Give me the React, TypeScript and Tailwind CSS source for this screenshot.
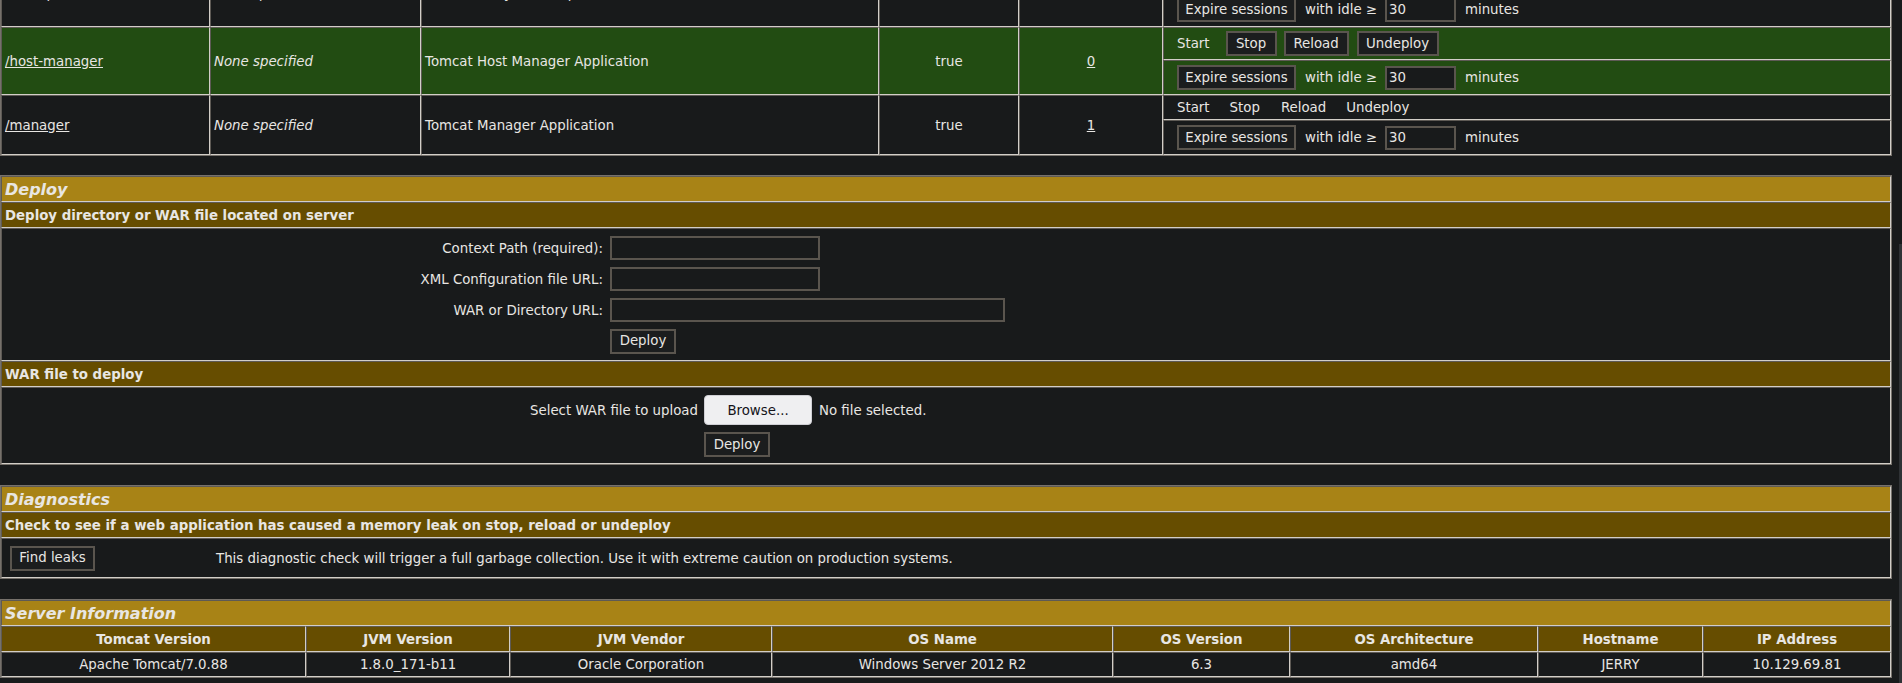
import { Fragment } from "react";

const cell =
  "border border-t-[#5e5a55] border-l-[#5e5a55] border-r-[#d2cec8] border-b-[#d2cec8]";
const btn =
  "h-[25px] border-2 border-[#5a554e] bg-[#1b1d1e] text-[#e8e6e3] text-[13.33px] leading-none flex items-center justify-center";
const field =
  "h-[24px] border-2 border-[#5a554e] bg-[#181a1b] text-[#e8e6e3] text-[13.33px] px-[2px] outline-none";

type App = {
  path: string;
  name: string;
  running: string;
  sessions: string;
  green: boolean;
  self: boolean;
};

const apps: App[] = [
  { path: "/examples", name: "Servlet and JSP Examples", running: "true", sessions: "0", green: false, self: false },
  { path: "/host-manager", name: "Tomcat Host Manager Application", running: "true", sessions: "0", green: true, self: false },
  { path: "/manager", name: "Tomcat Manager Application", running: "true", sessions: "1", green: false, self: true },
];

function Commands({ app }: { app: App }) {
  if (app.self) {
    return (
      <>
        <span>Start</span>
        <span className="ml-[20px]">Stop</span>
        <span className="ml-[21px]">Reload</span>
        <span className="ml-[20px]">Undeploy</span>
      </>
    );
  }
  return (
    <>
      <span>Start</span>
      <button type="button" className={`${btn} ml-[16px] w-[51px]`}>Stop</button>
      <button type="button" className={`${btn} ml-[7px] w-[65px]`}>Reload</button>
      <button type="button" className={`${btn} ml-[8px] w-[82px]`}>Undeploy</button>
    </>
  );
}

function AppsTable() {
  return (
    <div className="-mt-[42px] border border-[#76716b]">
      <div className="grid grid-cols-[209px_211px_458px_140px_144px_728px] grid-rows-[33px_35px_33px_35px_25px_35px]">
        {apps.map((app) => {
          const bg = app.green ? "bg-[#224c12]" : "bg-[#181a1b]";
          return (
            <Fragment key={app.path}>
              <div className={`${cell} ${bg} row-span-2 flex items-center px-[3px]`}>
                <a className="underline">{app.path}</a>
              </div>
              <div className={`${cell} ${bg} row-span-2 flex items-center px-[3px] italic`}>
                None specified
              </div>
              <div className={`${cell} ${bg} row-span-2 flex items-center px-[3px]`}>{app.name}</div>
              <div className={`${cell} ${bg} row-span-2 flex items-center justify-center`}>{app.running}</div>
              <div className={`${cell} ${bg} row-span-2 flex items-center justify-center`}>
                <a className="underline">{app.sessions}</a>
              </div>
              <div className={`${cell} ${bg} col-start-6 flex items-center pl-[13px]`}>
                <Commands app={app} />
              </div>
              <div className={`${cell} ${bg} col-start-6 flex items-center pl-[13px]`}>
                <button type="button" className={`${btn} h-[24px] w-[119px]`}>Expire sessions</button>
                <span className="ml-[9px]">with idle ≥</span>
                <input className={`${field} ml-[8px] w-[71px]`} defaultValue="30" />
                <span className="ml-[9px]">minutes</span>
              </div>
            </Fragment>
          );
        })}
      </div>
    </div>
  );
}

function Title({ children }: { children: string }) {
  return (
    <div className={`${cell} h-[26px] bg-[#a88316] flex items-center px-[3px] text-[16px] leading-[19px] font-bold italic`}>
      {children}
    </div>
  );
}

function Header({ children }: { children: string }) {
  return (
    <div className={`${cell} h-[26px] bg-[#664d00] flex items-center px-[3px] font-bold`}>{children}</div>
  );
}

function FormRow({ label, children }: { label: string; children: React.ReactNode }) {
  return (
    <div className="flex h-[24px] items-center mb-[7px]">
      <div className="w-[601px] text-right">{label}</div>
      <div className="ml-[7px] flex items-center">{children}</div>
    </div>
  );
}

function DeployTable() {
  return (
    <div className="mt-[19px] border border-[#76716b]">
      <Title>Deploy</Title>
      <Header>Deploy directory or WAR file located on server</Header>
      <div className={`${cell} h-[133px] pt-[7px]`}>
        <FormRow label="Context Path (required):">
          <input className={`${field} w-[210px]`} />
        </FormRow>
        <FormRow label="XML Configuration file URL:">
          <input className={`${field} w-[210px]`} />
        </FormRow>
        <FormRow label="WAR or Directory URL:">
          <input className={`${field} w-[395px]`} />
        </FormRow>
        <FormRow label="">
          <button type="button" className={`${btn} w-[66px]`}>Deploy</button>
        </FormRow>
      </div>
      <Header>WAR file to deploy</Header>
      <div className={`${cell} h-[77px] pt-[7px]`}>
        <div className="flex h-[30px] items-center">
          <div className="w-[696px] text-right">Select WAR file to upload</div>
          <button
            type="button"
            className="ml-[6px] h-[30px] w-[108px] rounded-[4px] border border-[#cfcfd4] bg-[#efeff1] text-[#15141a]"
          >
            Browse...
          </button>
          <span className="ml-[7px]">No file selected.</span>
        </div>
        <div className="mt-[7px] flex items-center">
          <div className="w-[696px]" />
          <button type="button" className={`${btn} ml-[6px] w-[66px]`}>Deploy</button>
        </div>
      </div>
    </div>
  );
}

function DiagnosticsTable() {
  return (
    <div className="mt-[20px] border border-[#76716b]">
      <Title>Diagnostics</Title>
      <Header>Check to see if a web application has caused a memory leak on stop, reload or undeploy</Header>
      <div className={`${cell} h-[40px] flex items-center pl-[8px]`}>
        <div className="w-[206px]">
          <button type="button" className={`${btn} h-[24px] w-[85px]`}>Find leaks</button>
        </div>
        <span>
          This diagnostic check will trigger a full garbage collection. Use it with extreme caution on production
          systems.
        </span>
      </div>
    </div>
  );
}

const serverCols = [
  ["Tomcat Version", "Apache Tomcat/7.0.88"],
  ["JVM Version", "1.8.0_171-b11"],
  ["JVM Vendor", "Oracle Corporation"],
  ["OS Name", "Windows Server 2012 R2"],
  ["OS Version", "6.3"],
  ["OS Architecture", "amd64"],
  ["Hostname", "JERRY"],
  ["IP Address", "10.129.69.81"],
];

function ServerTable() {
  return (
    <div className="mt-[20px] border border-[#76716b]">
      <Title>Server Information</Title>
      <div className="grid grid-cols-[305px_204px_262px_341px_177px_248px_165px_188px] grid-rows-[26px_25px]">
        {serverCols.map(([h]) => (
          <div key={h} className={`${cell} bg-[#664d00] flex items-center justify-center font-bold`}>
            {h}
          </div>
        ))}
        {serverCols.map(([h, v]) => (
          <div key={h + "v"} className={`${cell} flex items-center justify-center`}>
            {v}
          </div>
        ))}
      </div>
    </div>
  );
}

export default function App() {
  return (
    <div className="relative h-[683px] overflow-hidden bg-[#181a1b] font-['DejaVu_Sans',sans-serif] text-[13.33px] leading-[15px] text-[#e8e6e3]">
      <div className="w-[1892px]">
        <AppsTable />
        <DeployTable />
        <DiagnosticsTable />
        <ServerTable />
      </div>
      <div className="absolute right-0 top-[244px] bottom-0 w-[3px] bg-[#2f3235]" />
    </div>
  );
}
